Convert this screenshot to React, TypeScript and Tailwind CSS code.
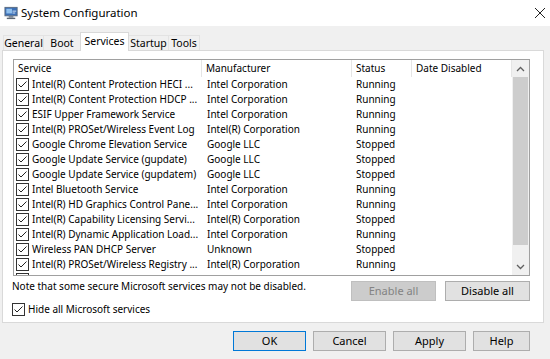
import React from "react";

const rows: [string, string, string][] = [
  ["Intel(R) Content Protection HECI ...", "Intel Corporation", "Running"],
  ["Intel(R) Content Protection HDCP ...", "Intel Corporation", "Running"],
  ["ESIF Upper Framework Service", "Intel Corporation", "Running"],
  ["Intel(R) PROSet/Wireless Event Log", "Intel(R) Corporation", "Running"],
  ["Google Chrome Elevation Service", "Google LLC", "Stopped"],
  ["Google Update Service (gupdate)", "Google LLC", "Stopped"],
  ["Google Update Service (gupdatem)", "Google LLC", "Stopped"],
  ["Intel Bluetooth Service", "Intel Corporation", "Running"],
  ["Intel(R) HD Graphics Control Pane...", "Intel Corporation", "Running"],
  ["Intel(R) Capability Licensing Servi...", "Intel(R) Corporation", "Stopped"],
  ["Intel(R) Dynamic Application Load...", "Intel Corporation", "Running"],
  ["Wireless PAN DHCP Server", "Unknown", "Stopped"],
  ["Intel(R) PROSet/Wireless Registry ...", "Intel(R) Corporation", "Running"],
];

function Check() {
  return (
    <div className="w-[13px] h-[13px] border border-[#333] bg-white flex items-center justify-center shrink-0">
      <svg width="11" height="11" viewBox="0 0 11 11">
        <path d="M1.5 5.5 L4 8 L9.5 2.5" fill="none" stroke="#222" strokeWidth="1" />
      </svg>
    </div>
  );
}

function Tab({ label, w, selected }: { label: string; w: string; selected?: boolean }) {
  if (selected) {
    return (
      <div
        className={`${w} h-[19px] -mb-px -ml-px relative z-10 bg-white border border-b-0 border-[#d9d9d9] flex items-start justify-center pt-[2px] text-[10.5px] leading-[13px] text-black`}
      >
        {label}
      </div>
    );
  }
  return (
    <div
      className={`${w} h-[15px] border border-b-0 border-[#e3e3e3] bg-[#f0f0f0] flex items-center justify-center text-[10.5px] leading-[13px] text-black -ml-px first:ml-0`}
    >
      {label}
    </div>
  );
}

function Btn({ label, w, primary, disabled }: { label: string; w: string; primary?: boolean; disabled?: boolean }) {
  return (
    <div
      className={`${w} h-[20px] flex items-center justify-center text-[11px] border ${
        primary
          ? "border-[#0078d7] bg-[#e1e1e1] text-black"
          : disabled
          ? "border-[#bfbfbf] bg-[#cccccc] text-[#838383]"
          : "border-[#adadad] bg-[#e1e1e1] text-black"
      }`}
    >
      {label}
    </div>
  );
}

export default function App() {
  return (
    <div
      className="w-[550px] h-[359px] bg-[#f0f0f0] flex flex-col overflow-hidden text-black"
      style={{ fontFamily: '"Noto Sans", "Open Sans", sans-serif' }}
    >
      {/* Title bar */}
      <div className="h-[26px] bg-white flex items-center pl-[4px] shrink-0">
        <svg width="15" height="14" viewBox="0 0 16 14" className="mr-[2px]">
          <rect x="1" y="1" width="13" height="9" fill="#3b6fb6" stroke="#5a6b80" strokeWidth="1" />
          <rect x="2.5" y="2.5" width="6" height="5" fill="#8fc0ee" />
          <rect x="5" y="10" width="5" height="2" fill="#7d8896" />
          <rect x="3" y="12" width="9" height="1.5" fill="#5e6874" />
          <path d="M9 5 L13 5 M9 7 L12 7" stroke="#d9e8f8" strokeWidth="1" />
        </svg>
        <span className="text-[11.5px] leading-none">System Configuration</span>
        <div className="flex-1" />
        <svg width="12" height="12" viewBox="0 0 12 12" className="mr-[4px]">
          <path d="M1 1 L11 11 M11 1 L1 11" stroke="#222" strokeWidth="1" />
        </svg>
      </div>

      {/* Tabs */}
      <div className="h-[24px] flex items-end pl-[3px] shrink-0">
        <Tab label="General" w="w-[41px]" />
        <Tab label="Boot" w="w-[38px]" />
        <Tab label="Services" w="w-[49px]" selected />
        <Tab label="Startup" w="w-[41px]" />
        <Tab label="Tools" w="w-[32px]" />
      </div>

      {/* Panel */}
      <div className="ml-[2px] w-[542px] h-[273px] bg-white border border-[#d9d9d9] pl-[10px] pt-[8px] flex flex-col shrink-0">
        {/* List view */}
        <div className="w-[517px] h-[217px] border border-[#a0a0a0] flex overflow-hidden">
          <div className="w-[498px] flex flex-col text-[10px]">
            <div className="h-[17px] flex items-center shrink-0">
              <div className="w-[188px] h-full pl-[4px] flex items-center border-r border-[#e5e5e5]">Service</div>
              <div className="w-[150px] h-full pl-[4px] flex items-center border-r border-[#e5e5e5]">Manufacturer</div>
              <div className="w-[60px] h-full pl-[4px] flex items-center border-r border-[#e5e5e5]">Status</div>
              <div className="w-[100px] h-full pl-[4px] flex items-center border-r border-[#e5e5e5]">Date Disabled</div>
            </div>
            {rows.map((r, i) => (
              <div key={i} className="h-[15px] flex items-center shrink-0">
                <div className="w-[188px] pl-[2px] flex items-center gap-[3px] overflow-hidden whitespace-nowrap">
                  <Check />
                  <span>{r[0]}</span>
                </div>
                <div className="w-[150px] pl-[5px] whitespace-nowrap">{r[1]}</div>
                <div className="w-[60px] pl-[4px] whitespace-nowrap">{r[2]}</div>
                <div className="w-[100px]" />
              </div>
            ))}
            <div className="h-[15px] flex items-start pt-px pl-[2px] shrink-0">
              <Check />
            </div>
          </div>
          {/* Scrollbar */}
          <div className="w-[17px] bg-[#f0f0f0] flex flex-col shrink-0">
            <div className="h-[17px] flex items-center justify-center shrink-0">
              <svg width="9" height="6" viewBox="0 0 9 6">
                <path d="M1 5 L4.5 1.5 L8 5" fill="none" stroke="#606060" strokeWidth="1.3" />
              </svg>
            </div>
            <div className="h-[168px] mx-px bg-[#cdcdcd] shrink-0" />
            <div className="flex-1" />
            <div className="h-[17px] flex items-center justify-center shrink-0">
              <svg width="9" height="6" viewBox="0 0 9 6">
                <path d="M1 1 L4.5 4.5 L8 1" fill="none" stroke="#606060" strokeWidth="1.3" />
              </svg>
            </div>
          </div>
        </div>

        {/* Below list */}
        <div className="w-[517px] flex justify-between">
          <div className="flex flex-col text-[10px] -ml-px">
            <div className="mt-[4px] h-[12px] leading-[12px]">Note that some secure Microsoft services may not be disabled.</div>
            <div className="mt-[10px] flex items-center gap-[3px]">
              <Check />
              <span className="text-[10px]">Hide all Microsoft services</span>
            </div>
          </div>
          <div className="flex gap-[9px] mt-[5px]">
            <Btn label="Enable all" w="w-[85px]" disabled />
            <Btn label="Disable all" w="w-[85px]" />
          </div>
        </div>
      </div>

      {/* Bottom buttons */}
      <div className="flex justify-end pr-[20px] pt-[8px] gap-[7px]">
        <Btn label="OK" w="w-[73px]" primary />
        <Btn label="Cancel" w="w-[73px]" />
        <Btn label="Apply" w="w-[73px]" />
        <Btn label="Help" w="w-[57px]" />
      </div>
    </div>
  );
}
